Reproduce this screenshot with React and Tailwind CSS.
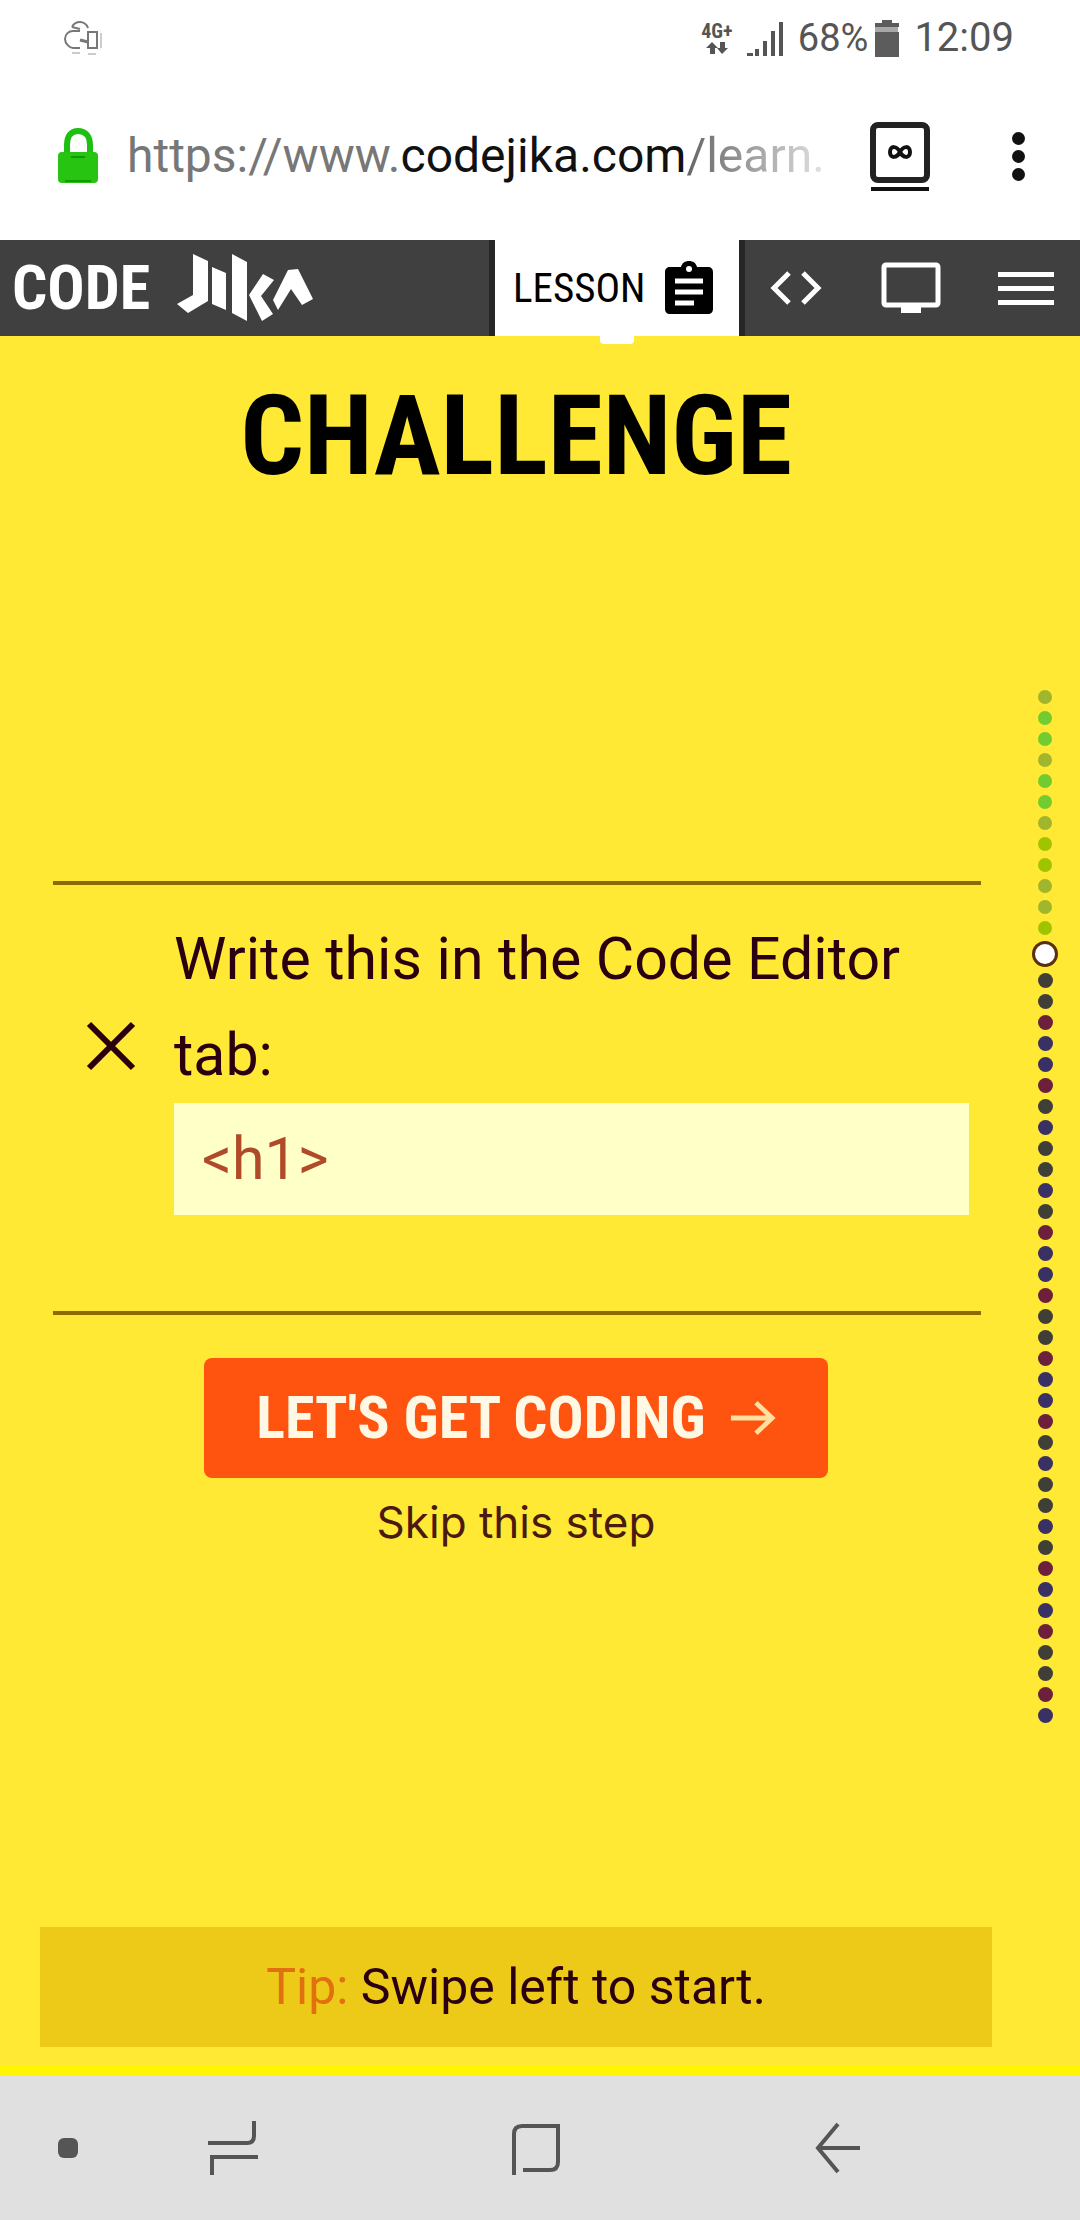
const NARROW = "font-['Roboto_Condensed','Liberation_Sans_Narrow',Roboto,sans-serif]";

const doneColors = [
  "bg-[#a0b62c]", "bg-[#72cc30]", "bg-[#72cc30]", "bg-[#a0b62c]", "bg-[#72cc30]", "bg-[#72cc30]",
  "bg-[#a0b62c]", "bg-[#a0c400]", "bg-[#a0c400]", "bg-[#a0b62c]", "bg-[#a0b62c]", "bg-[#a0c400]",
];
const K = "bg-[#3f3f38]";
const R = "bg-[#6d203c]";
const B = "bg-[#393064]";
const todoColors = [
  K, K, R, B, B, R, K, B, K, K, B, K, R, B, B, R, K, K,
  R, B, B, R, K, B, K, K, B, K, R, B, B, R, K, K, R, B,
];

function StatusBar() {
  return (
    <header className="flex h-[76px] items-center justify-between pr-[66px] pl-[62px] text-[#555]">
      <svg className="h-[40px] w-[42px]" viewBox="0 0 42 40" fill="none" stroke="#777" strokeWidth="2" aria-hidden="true">
        <path d="M18 30H11c-3 0-8-4-8-9s4-8 8-8h7M10 9c2-4 5-5 8-5s7 2 8 6M10 9l8 2" />
        <rect x="26" y="14" width="9" height="16" />
        <path d="M18 22l8 2" strokeWidth="3" />
        <path d="M39 15v15M10 35h8M26 36h8" stroke="#ccc" />
      </svg>
      <div className="flex items-center">
        <div className="flex w-[38px] flex-col items-center">
          <span className={`${NARROW} text-[20px] leading-[18px] font-bold`}>4G+</span>
          <svg className="h-[14px] w-[24px]" viewBox="0 0 24 14" fill="#555" aria-hidden="true">
            <path d="M5 14V8H1l6-6 6 6h-3v6zM15 2h5v6h3l-6 6-5-6h3z" />
          </svg>
        </div>
        <svg className="ml-[10px] h-[38px] w-[38px]" viewBox="0 0 38 38" fill="#555" aria-hidden="true">
          <path d="M1 34h6v3H1zM9 30h4v7H9zM17 22h4v15h-4zM25 12h4v25h-4zM33 3h4v34h-4z" />
        </svg>
        <span className="ml-[14px] font-[Roboto,sans-serif] text-[38px] leading-[40px]">68%</span>
        <svg className="ml-[6px] h-[38px] w-[26px]" viewBox="0 0 26 38" aria-hidden="true">
          <path d="M8 4V1h10v3h6v10H1V4z" fill="#a8a8a8" />
          <path d="M1 13h24v25H1zM8 1h10v3h7v4H1V4h7z" fill="#5c5c5c" />
        </svg>
        <span className="ml-[14px] font-[Roboto,sans-serif] text-[40px] leading-[40px]">12:09</span>
      </div>
    </header>
  );
}

function AddressBar() {
  return (
    <div className="flex h-[164px] items-center pr-[50px] pb-[4px] pl-[57px]">
      <svg className="h-[58px] w-[42px] shrink-0" viewBox="0 0 42 58" aria-hidden="true">
        <path d="M10 28V18C10 9 14 4 21 4s12 5 12 14v10" fill="none" stroke="#1ebe12" strokeWidth="6" />
        <rect x="1" y="25" width="40" height="31" rx="4" fill="#27c411" />
        <path d="M8 54h26M14 30h14" stroke="#109900" strokeWidth="2" />
      </svg>
      <a href="https://www.codejika.com/learn" className="ml-[28px] flex-1 overflow-hidden font-[Roboto,sans-serif] text-[48px] leading-[60px] whitespace-nowrap text-[#777]">
        https://www.<span className="text-[#111]">codejika.com</span>
        <span className="bg-linear-to-r from-[#666] to-[#e4e4e4] bg-clip-text text-transparent">/learn.</span>
      </a>
      <button type="button" aria-label="Tabs" className="flex w-[60px] flex-col items-center gap-[4px]">
        <span className="flex h-[61px] w-[60px] items-center justify-center rounded-lg border-[6px] border-[#222]">
          <svg className="h-[18px] w-[26px]" viewBox="0 0 26 18" fill="none" stroke="#111" strokeWidth="4" aria-hidden="true">
            <path d="M13 9C10 3 3 2 3 9s7 6 10 0 10-7 10 0-7 6-10 0z" />
          </svg>
        </span>
        <span className="h-[4px] w-[58px] bg-[#111]" />
      </button>
      <button type="button" aria-label="More options" className="ml-[76px] flex w-[24px] flex-col items-center gap-[5px]">
        <span className="size-[13px] rounded-full bg-[#111]" />
        <span className="size-[13px] rounded-full bg-[#111]" />
        <span className="size-[13px] rounded-full bg-[#111]" />
      </button>
    </div>
  );
}

function SiteBar() {
  return (
    <nav className="flex h-[96px] bg-[#404040]">
      <a href="#home" className="flex flex-1 items-center pl-[12px] text-white">
        <span className={`${NARROW} text-[62px] leading-[60px] font-bold`}>CODE</span>
        <svg className="ml-[26px] h-[70px] w-[138px]" viewBox="0 0 138 70" fill="#fff" role="img" aria-label="Jika">
          <path d="M17 1L32 8V48L12 60L1 51L17 42ZM36 14L50 20V57L36 51ZM56 1L71 9V68L56 60ZM87 21L98 27L85 43L97 61L86 68L73 42ZM97 47L112 17L122 16L137 46L126 52L115 36L102 57Z" />
        </svg>
      </a>
      <button type="button" className="relative flex w-[256px] items-center border-x-[6px] border-[#262626] bg-white pl-[18px] text-black">
        <span className={`${NARROW} w-[134px] text-left text-[41px] leading-[48px]`}>LESSON</span>
        <svg className="ml-[18px] h-[54px] w-[48px]" viewBox="0 0 48 54" aria-hidden="true">
          <path d="M5 6h11c1-4 4-6 8-6s7 2 8 6h11c3 0 5 2 5 5v37c0 3-2 5-5 5H5c-3 0-5-2-5-5V11c0-3 2-5 5-5z" fill="#000" />
          <circle cx="24" cy="8" r="3" fill="#fff" />
          <path d="M10 20h28M10 31h28M10 42h19" stroke="#fff" strokeWidth="5" />
        </svg>
        <span className="absolute top-full left-[105px] h-[8px] w-[34px] rounded-b-sm bg-white" />
      </button>
      <div className="flex items-center pr-[26px] pl-[24px]">
        <button type="button" aria-label="Code editor">
          <svg className="h-[34px] w-[54px]" viewBox="0 0 54 34" fill="none" stroke="#fff" strokeWidth="5" aria-hidden="true">
            <path d="M20 2L5 17l15 15M34 2l15 15-15 15" />
          </svg>
        </button>
        <button type="button" aria-label="Preview" className="ml-[58px]">
          <svg className="h-[52px] w-[60px]" viewBox="0 0 60 52" aria-hidden="true">
            <rect x="3" y="3" width="54" height="40" rx="2" fill="none" stroke="#fff" strokeWidth="5" />
            <path d="M20 44h20v7H20z" fill="#fff" />
          </svg>
        </button>
        <button type="button" aria-label="Menu" className="ml-[57px] flex w-[56px] flex-col gap-[9px]">
          <span className="h-[5px] bg-white" />
          <span className="h-[5px] bg-white" />
          <span className="h-[5px] bg-white" />
        </button>
      </div>
    </nav>
  );
}

function Lesson() {
  return (
    <section className="flex flex-1 flex-col pt-[44px] pb-[29px]">
      <h1 className={`${NARROW} text-center text-[112px] leading-[112px] font-bold text-black`}>CHALLENGE</h1>
      <div className="mt-[389px] mr-[51px] ml-[53px] flex h-[434px] border-y-[4px] border-[#8d6b00] pt-[26px] pr-[12px]">
        <svg className="mt-[108px] ml-[33px] h-[54px] w-[50px] shrink-0" viewBox="0 0 50 54" stroke="#2a0010" strokeWidth="6" aria-hidden="true">
          <path d="M3 5l44 44M47 5L3 49" />
        </svg>
        <div className="ml-[38px] flex-1 font-[Roboto,sans-serif] text-[59px] leading-[96px] text-[#2a0010]">
          <p>Write this in the Code Editor tab:</p>
          <code className="block h-[112px] bg-[#ffffc8] pl-[28px] font-[Roboto,sans-serif] leading-[112px] text-[#b04a28]">&lt;h1&gt;</code>
        </div>
      </div>
      <div className="mt-[43px] flex flex-col items-center">
        <button type="button" className={`${NARROW} flex h-[120px] w-[624px] items-center justify-center rounded-lg bg-[#ff5310] text-[60px] font-bold text-[#fff8e4]`}>
          LET'S GET CODING
          <svg className="ml-[24px] h-[38px] w-[46px]" viewBox="0 0 48 38" fill="none" stroke="#ffe0a0" strokeWidth="5" aria-hidden="true">
            <path d="M1 19h42M27 3l17 16-17 16" />
          </svg>
        </button>
        <a href="#skip" className="mt-[16px] font-[Inter,sans-serif] text-[44px] leading-[56px] text-[#4a1a10]">Skip this step</a>
      </div>
      <p className="mx-[40px] mt-auto bg-[#edca18] text-center font-[Roboto,sans-serif] text-[50px] leading-[120px] text-[#2a0010]">
        <span className="text-[#e07010]">Tip:</span> Swipe left to start.
      </p>
    </section>
  );
}

function Progress() {
  return (
    <ol aria-label="Lesson progress" className="mr-[22px] flex w-[26px] flex-col items-center self-center">
      {doneColors.map((c, i) => (
        <li key={i} className="flex h-[21px] items-center"><span className={`size-[14px] rounded-full ${c}`} /></li>
      ))}
      <li className="flex h-[32px] items-center"><span className="size-[26px] rounded-full border-[3px] border-[#5a3010] bg-white" /></li>
      {todoColors.map((c, i) => (
        <li key={i} className="flex h-[21px] items-center"><span className={`size-[15px] rounded-full ${c}`} /></li>
      ))}
    </ol>
  );
}

function SystemBar() {
  return (
    <footer className="flex h-[144px] items-center bg-[#e0e0e0] pl-[58px]">
      <span className="size-[20px] rounded-md bg-[#555]" />
      <button type="button" aria-label="Recent apps" className="ml-[130px]">
        <svg className="h-[54px] w-[50px]" viewBox="0 0 50 54" fill="none" stroke="#555" strokeWidth="4" aria-hidden="true">
          <path d="M46 0v15q0 7-7 7H0M4 54V36h46" />
        </svg>
      </button>
      <button type="button" aria-label="Home" className="ml-[252px]">
        <svg className="h-[54px] w-[52px]" viewBox="0 0 52 54" fill="none" stroke="#555" strokeWidth="4" aria-hidden="true">
          <path d="M4 54V13q0-8 8-8h36v36q0 8-8 8H13" />
        </svg>
      </button>
      <button type="button" aria-label="Back" className="ml-[252px]">
        <svg className="h-[54px] w-[48px]" viewBox="0 0 48 54" fill="none" stroke="#555" strokeWidth="4" aria-hidden="true">
          <path d="M24 3L4 27l20 24M3 27h43" />
        </svg>
      </button>
    </footer>
  );
}

export default function App() {
  return (
    <div className="flex min-h-screen flex-col bg-white">
      <StatusBar />
      <AddressBar />
      <SiteBar />
      <main className="flex flex-1 bg-[#ffe935] shadow-[inset_0_-10px_0_#fff500]">
        <Lesson />
        <Progress />
      </main>
      <SystemBar />
    </div>
  );
}
